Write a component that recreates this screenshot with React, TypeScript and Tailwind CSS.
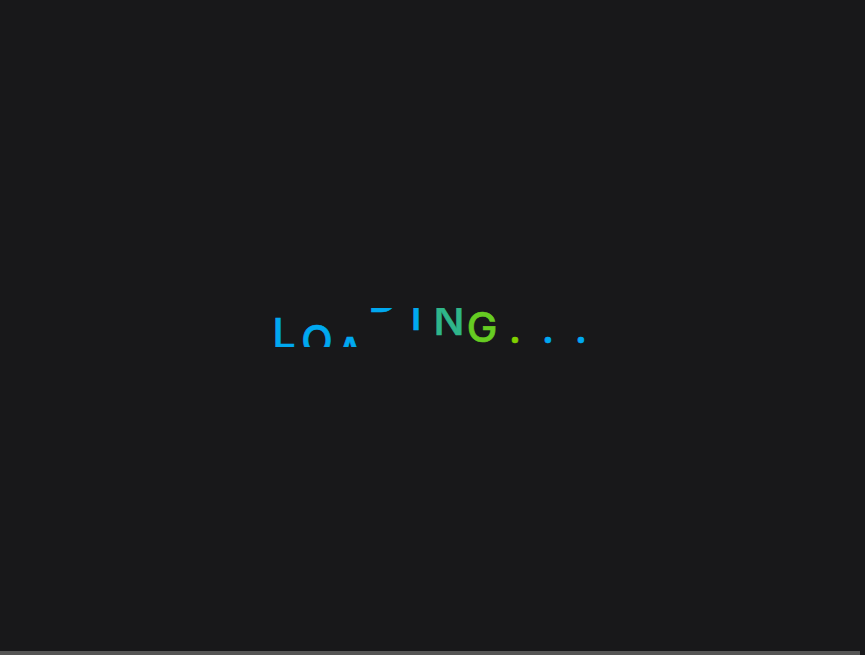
const letters = [
  { char: 'L', className: 'translate-y-[6px] text-[#00a8f0]' },
  { char: 'O', className: 'translate-y-[13px] text-[#00a8f0]' },
  { char: 'A', className: 'translate-y-[25px] text-[#00a8f0]' },
  { char: 'D', className: '-translate-y-[30px] text-[#00a8f0]' },
  { char: 'I', className: '-translate-y-[12px] text-[#00a8f0]' },
  { char: 'N', className: '-translate-y-[7px] text-[#2fb58a]' },
  { char: 'G', className: 'translate-y-0 text-[#66cc22]' },
  { char: '.', className: 'translate-y-px text-[#80d000]' },
  { char: '.', className: 'translate-y-px text-[#00a8f0]' },
  { char: '.', className: 'translate-y-px text-[#00a8f0]' },
]

export default function App() {
  return (
    <div className="flex h-screen flex-col overflow-hidden bg-[#18181a]">
      <div className="flex flex-1 items-center justify-center">
        <div className="mt-[4px] flex h-[39px] overflow-hidden font-['Inter',sans-serif] text-[41px] leading-[39px] font-medium [-webkit-text-stroke:0.6px]">
          {letters.map((letter, i) => (
            <span
              key={i}
              className={`inline-block w-[33px] text-center ${letter.className}`}
            >
              {letter.char}
            </span>
          ))}
        </div>
      </div>
      <div className="h-[4px] w-[860px] bg-[#555555]" />
    </div>
  )
}
